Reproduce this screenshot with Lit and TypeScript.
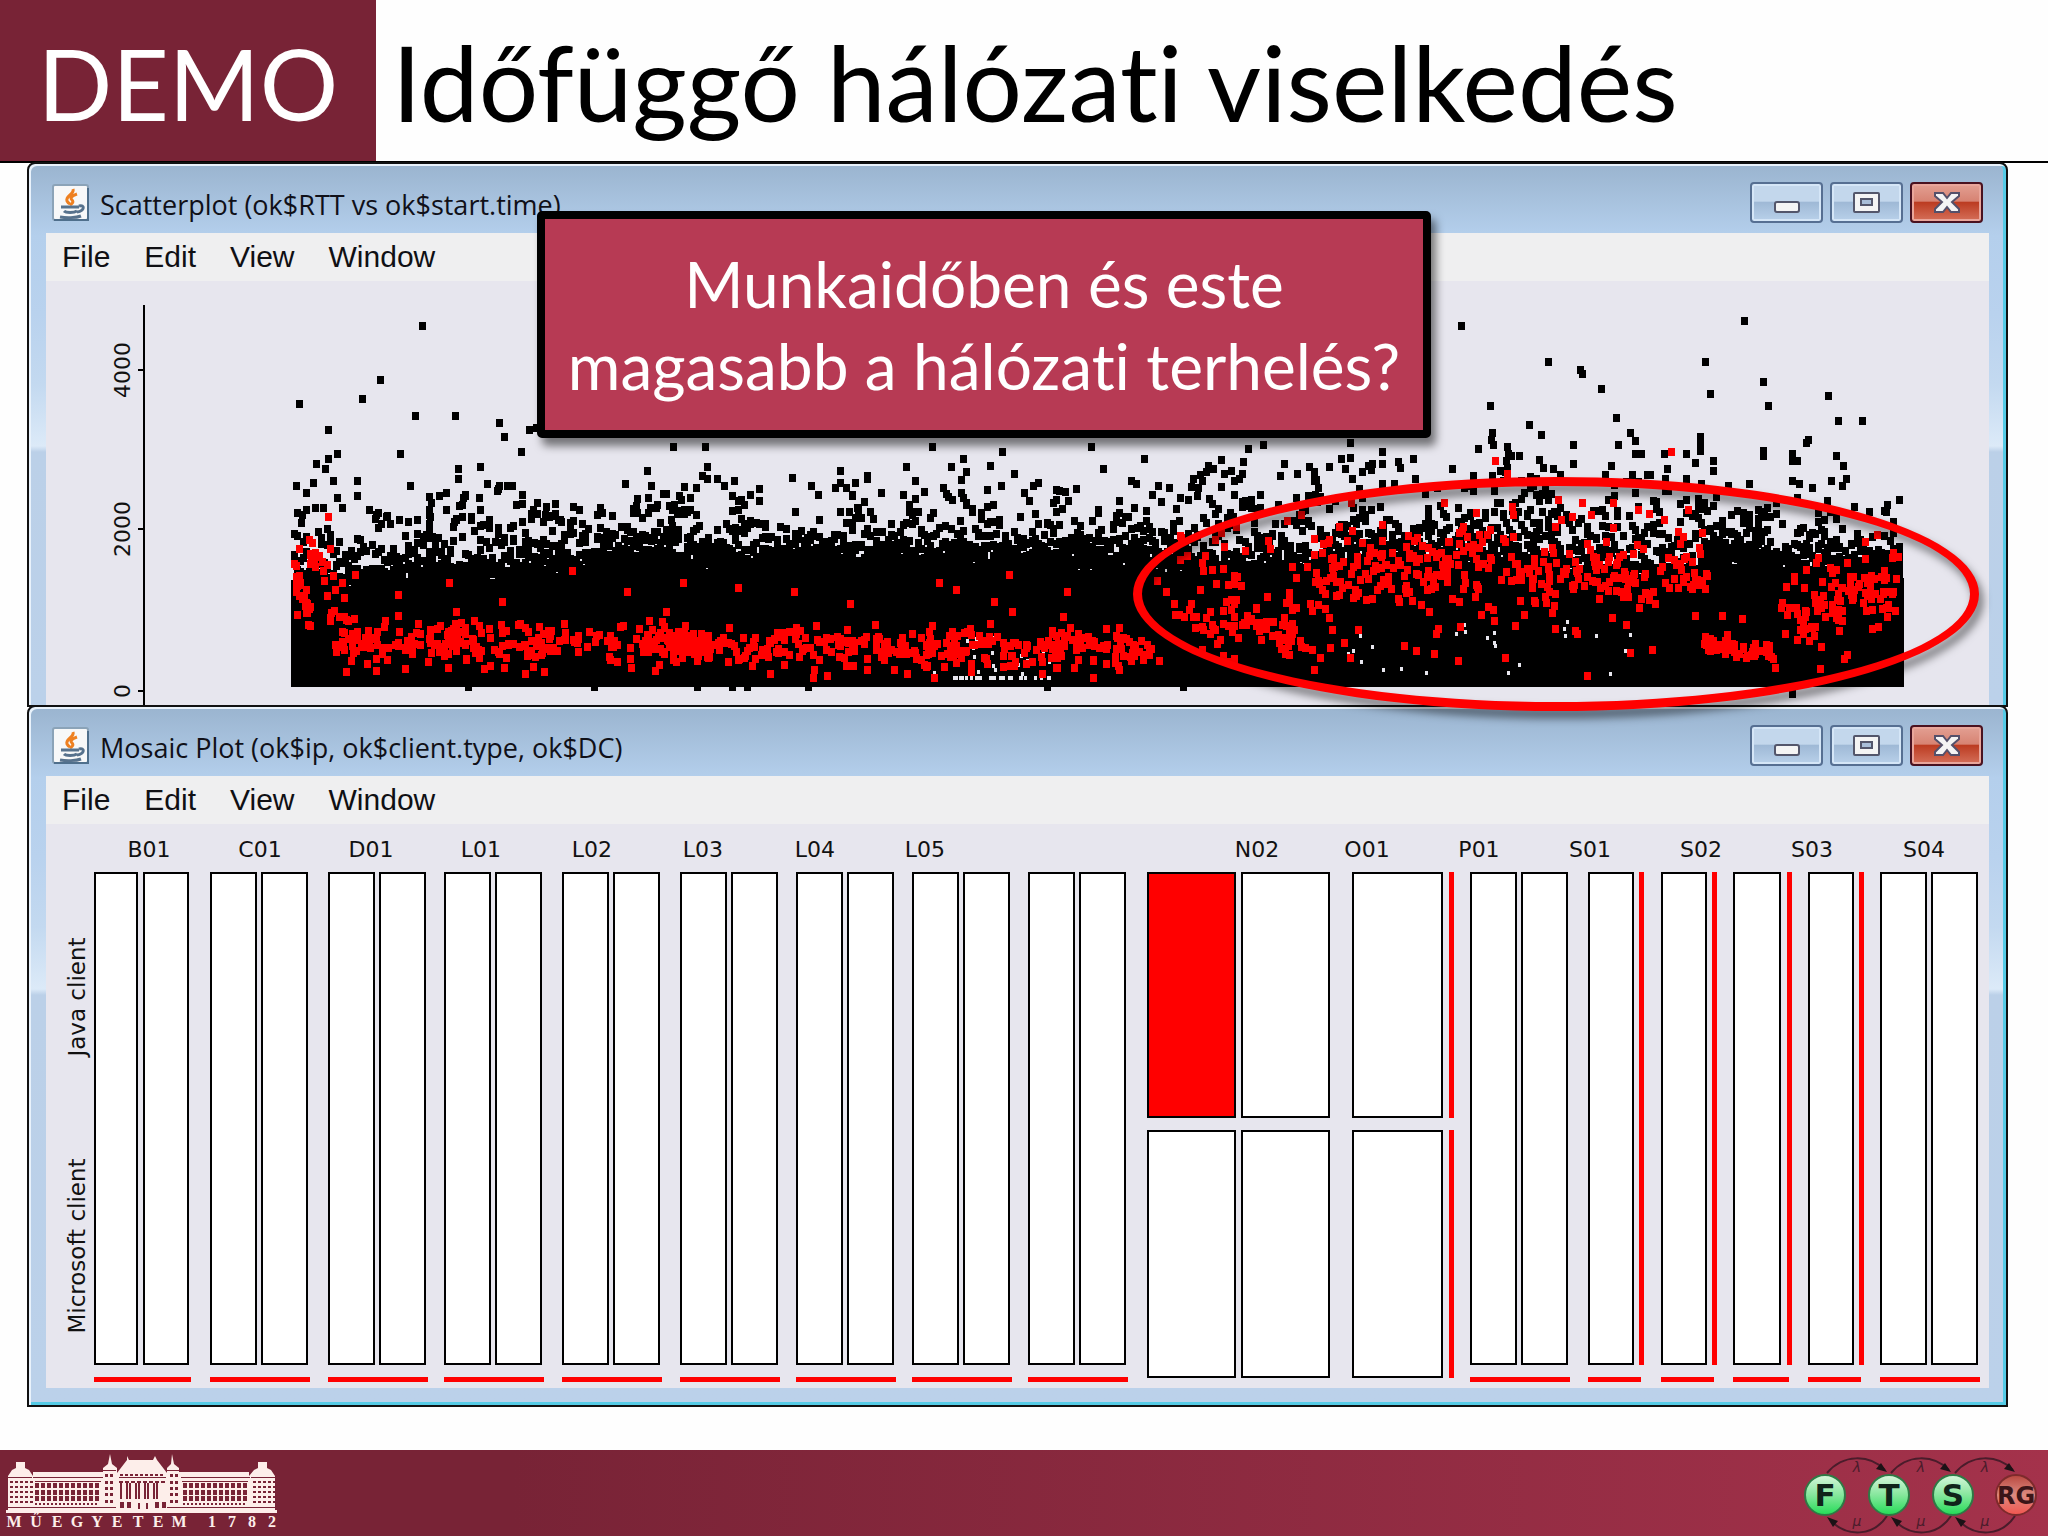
import { LitElement, html, svg, css } from "lit";
import { customElement, property } from "lit/decorators.js";

type Point = [number, number];

/** Deterministic pseudo random generator, so that the plot is stable between renders. */
function createRandom(seed: number): () => number {
  let s = seed;
  return () => {
    s = (s + 0x6d2b79f5) | 0;
    let t = Math.imul(s ^ (s >>> 15), 1 | s);
    t = (t + Math.imul(t ^ (t >>> 7), 61 | t)) ^ t;
    return ((t ^ (t >>> 14)) >>> 0) / 4294967296;
  };
}

const DATA_LEFT = 294;
const DATA_RIGHT = 1901;
const DATA_BOTTOM = 687;

/** Isolated slow requests, centre of each mark. */
const SLOW: Point[] = [
  [422,326],[380,380],[362,399],[299,404],[415,416],[455,416],[499,423],[504,437],[328,430],[529,430],[536,428],
  [337,454],[400,454],[328,459],[316,464],[325,469],[458,469],[480,467],[458,479],[521,452],[673,447],[647,471],
  [625,484],[296,486],[313,483],[333,481],[357,481],[306,493],[410,486],[487,484],[499,486],[497,491],[512,486],
  [337,498],[357,496],[439,496],[446,493],[463,498],[479,498],[429,497],[431,503],[429,510],[430,517],[429,524],
  [429,531],[430,538],[306,510],[302,515],[301,523],[315,508],[323,508],[342,508],[369,510],[376,515],[386,517],
  [399,520],[417,520],[446,510],[454,522],[480,510],[533,510],[545,515],[579,510],[602,513],[560,520],[637,499],
  [636,506],[637,513],[636,537],[648,498],[656,508],[650,508],[679,496],[672,510],[677,513],[671,520],[674,505],
  [705,447],[932,447],[1002,452],[1091,447],[963,459],[951,467],[966,472],[961,480],[1014,474],[1103,469],
  [1144,459],[707,467],[707,479],[717,479],[734,481],[724,486],[811,486],[835,488],[867,479],[818,495],[852,495],
  [881,493],[903,495],[857,508],[943,488],[948,497],[961,493],[946,494],[952,500],[963,498],[1001,486],[1033,486],[1038,483],
  [1024,493],[1059,491],[1056,500],[1076,489],[1098,510],[1131,481],[1136,484],[1169,488],[1180,498],[1188,500],
  [1248,449],[1263,445],[1243,462],[1231,471],[1234,481],[1234,495],[1208,466],[1213,469],[1200,475],[1193,479],
  [1202,481],[1198,488],[1206,472],[1284,464],[1280,476],[1297,474],[1309,467],[1314,472],[1316,480],[1318,488],
  [1315,495],[1320,497],[1350,443],[1341,459],[1350,458],[1345,469],[1352,479],[1461,326],[1744,321],[1548,362],
  [1580,370],[1582,374],[1705,362],[1601,389],[1710,394],[1763,382],[1490,406],[1768,406],[1828,396],[1838,421],
  [1862,421],[1616,418],[1529,425],[1541,435],[1492,433],[1491,440],[1493,445],[1630,433],[1635,441],[1573,445],
  [1618,445],[1700,437],[1700,444],[1700,451],[1686,454],[1664,454],[1635,454],[1641,454],[1478,449],[1507,447],
  [1508,454],[1506,461],[1507,468],[1505,472],[1519,456],[1511,456],[1763,451],[1763,456],[1808,440],[1806,443],
  [1792,454],[1792,461],[1797,461],[1836,456],[1843,466],[1846,479],[1831,481],[1792,481],[1799,484],[1749,484],
  [1713,461],[1713,471],[1686,479],[1667,469],[1573,464],[1611,466],[1539,460],[1543,468],[1553,469],[1560,475],
  [1452,469],[1413,459],[1398,462],[1400,468],[1382,452],[1382,464],[1372,464],[1368,466],[1382,484],[1394,484],
  [1415,479],[1473,476],[1492,476],[1899,500],[1886,512],[1792,694],[468,687],[594,687],[697,687],
  [732,687],[747,687],[808,687],[1047,687],[1183,687],
];

/** Isolated marks of the selected machine. */
const RED_SINGLE: Point[] = [
  [328,517],[309,540],[299,549],[330,549],[355,575],[398,595],[449,583],[456,612],[398,616],[502,602],[572,571],
  [627,592],[666,612],[683,583],[738,588],[794,592],[850,604],[939,583],[956,590],[1009,575],[994,602],[1067,592],
  [1671,452],[1495,461],[1507,474],[1287,521],[1301,515],[1352,531],[1180,536],[1157,581],[1166,592],[1174,604],[1695,616],
  [1742,619],[1877,535],[1351,503],[1444,503],[1448,542],[1512,507],[1513,515],[1558,500],[1582,503],[1613,503],
  [1638,510],[1688,510],[1591,515],[1561,520],[1664,520],[1613,528],[1678,532],[1353,598],[1722,616],
];

/** Upper edge of the solid black band and the fall-off height above it. */
function profile(x: number): { top: number; spread: number } {
  if (x < 330) return { top: 575, spread: 30 };
  if (x < 500) return { top: 574 - (x - 330) * 0.05, spread: 22 };
  if (x < 660) return { top: 566 - (x - 500) * 0.1, spread: 25 };
  if (x < 1150) return { top: 552, spread: 24 };
  if (x < 1350) return { top: 558, spread: 29 };
  if (x < 1560) return { top: 550, spread: 27 };
  if (x < 1700) return { top: 562, spread: 33 };
  if (x < 1770) return { top: 545, spread: 19 };
  return { top: 560, spread: 22 };
}

function buildBlack(): Point[] {
  const random = createRandom(41);
  const points: Point[] = [...SLOW];
  let burst = 1;
  for (let x = DATA_LEFT; x <= DATA_RIGHT; x += 3) {
    const { top, spread } = profile(x);
    if (random() < 0.3) burst = 0.5 + random();
    for (let i = 0; i < 4; i++) {
      const height = -Math.log(1 - random() * 0.94) * spread * burst;
      points.push([x, top - height + 7]);
    }
    for (let y = top + 6; y < top + 26; y += 6) points.push([x, y + random() * 6]);
  }
  return points;
}

function buildRed(): Point[] {
  const random = createRandom(97);
  const bell = () => random() + random() + random() - 1.5;
  const points: Point[] = [...RED_SINGLE];
  const cloud = (n: number, x0: number, x1: number, y0: number, y1: number, sd: number) => {
    for (let i = 0; i < n; i++) {
      const k = random();
      points.push([x0 + (x1 - x0) * k, y0 + (y1 - y0) * k + bell() * sd * 2]);
    }
  };
  cloud(28, 294, 312, 575, 612, 13);
  cloud(14, 308, 328, 556, 568, 7);
  cloud(18, 322, 358, 580, 640, 22);
  cloud(230, 334, 700, 640, 645, 9);
  cloud(290, 640, 1150, 646, 648, 9);
  cloud(45, 700, 1160, 640, 644, 14);
  cloud(30, 330, 1160, 670, 670, 4);
  cloud(60, 1172, 1296, 616, 632, 9);
  cloud(50, 1180, 1330, 570, 600, 28);
  cloud(150, 1310, 1708, 563, 580, 20);
  cloud(90, 1310, 1708, 574, 574, 12);
  cloud(60, 1310, 1708, 604, 600, 32);
  cloud(20, 1330, 1708, 545, 540, 20);
  cloud(20, 1200, 1600, 652, 650, 11);
  cloud(60, 1704, 1776, 644, 656, 5);
  cloud(50, 1778, 1901, 616, 590, 18);
  cloud(40, 1800, 1901, 616, 580, 12);
  cloud(18, 1775, 1901, 575, 560, 20);
  cloud(8, 1790, 1850, 636, 650, 12);
  return points.filter(([, y]) => y < 680);
}

function buildGaps(): Point[] {
  const random = createRandom(12);
  const points: Point[] = [];
  for (let i = 0; i < 26; i++) points.push([930 + random() * 160, 636 + random() * 40]);
  for (let i = 0; i < 24; i++) points.push([1340 + random() * 300, 622 + random() * 54]);
  for (let i = 0; i < 24; i++) points.push([950 + random() * 120, 678]);
  return points;
}

const marks = (points: Point[], w: number, h: number) =>
  points
    .map(([x, y]) => `M${Math.round(x - w / 2)} ${Math.round(y - h / 2)}h${w}v${h}h-${w}z`)
    .join("");

const BLACK_PATH = marks(buildBlack(), 7, 8);
const RED_PATH = marks(buildRed(), 7, 8);
const GAP_PATH = marks(buildGaps(), 3, 4);

interface MosaicGroup {
  /** Left and right edges of the framed cells. */
  cells: Point[];
  /** Empty category drawn as a vertical red bar. */
  bar?: number;
  /** Split into two client types. */
  split?: boolean;
  selected?: boolean;
}

const pair = (x: number): MosaicGroup => ({ cells: [[x, x + 45], [x + 51, x + 96]] });

const MOSAIC: MosaicGroup[] = [
  { cells: [[95, 137], [144, 188]] },
  pair(211), pair(329), pair(445), pair(563), pair(681), pair(797), pair(913), pair(1029),
  { cells: [[1148, 1235], [1242, 1329]], split: true, selected: true },
  { cells: [[1353, 1442]], bar: 1451, split: true },
  pair(1471),
  { cells: [[1589, 1633]], bar: 1641 },
  { cells: [[1662, 1706]], bar: 1714 },
  { cells: [[1734, 1780]], bar: 1789 },
  { cells: [[1809, 1853]], bar: 1861 },
  pair(1881),
];

const MOSAIC_LABELS: [string, number][] = [
  ["B01", 149], ["C01", 260], ["D01", 371], ["L01", 481], ["L02", 592], ["L03", 703], ["L04", 815], ["L05", 925],
  ["N02", 1257], ["O01", 1367], ["P01", 1479], ["S01", 1590], ["S02", 1701], ["S03", 1812], ["S04", 1924],
];

@customElement("scatter-chart")
export class ScatterChart extends LitElement {
  static styles = css`
    :host { display: block; }
    .chart { display: block; width: 100%; height: auto; }
    .tick { font: 22px "DejaVu Sans", sans-serif; fill: #111; text-anchor: middle; }
    .axis { stroke: #000; stroke-width: 2; fill: none; }
    .gap { fill: #e7e6ee; }
    .red { fill: #ff0000; }
  `;

  render() {
    return html`
      <svg class="chart" viewBox="46 281 1943 424" role="img" aria-label="Scatterplot" shape-rendering="crispEdges">
        <path class="axis" d="M144 305V705M138 370h6M138 529h6M138 691h6" />
        ${([["4000", 370], ["2000", 529], ["0", 691]] as [string, number][]).map(
          ([label, y]) => svg`<text class="tick" transform="translate(130 ${y}) rotate(-90)">${label}</text>`,
        )}
        <path d="M291 592H330V588H500L660 570H1150V572H1350V566H1560V576H1700V564H1770V578H1904V${DATA_BOTTOM}H291z" />
        <path d=${BLACK_PATH} />
        <path class="gap" d=${GAP_PATH} />
        <path class="red" d=${RED_PATH} />
      </svg>
    `;
  }
}

@customElement("mosaic-chart")
export class MosaicChart extends LitElement {
  static styles = css`
    :host { display: block; }
    .chart { display: block; width: 100%; height: auto; }
    .label { font: 22px "DejaVu Sans", sans-serif; fill: #111; text-anchor: middle; }
    .label.side { font-size: 23px; }
    .cell { fill: #fff; stroke: #000; stroke-width: 2; }
    .cell.hot { fill: #ff0000; }
    .bar { stroke: #ff0000; stroke-width: 5; }
  `;

  private group(g: MosaicGroup) {
    const rows: Point[] = g.split ? [[873, 1117], [1131, 1377]] : [[873, 1364]];
    const left = g.cells[0][0] - 1;
    const right = g.bar ?? g.cells[g.cells.length - 1][1] + 3;
    return svg`
      ${rows.map(([top, bottom], row) => svg`
        ${g.cells.map(([x0, x1], i) => svg`
          <rect class=${g.selected && row === 0 && i === 0 ? "cell hot" : "cell"}
            x=${x0} y=${top} width=${x1 - x0} height=${bottom - top} />`)}
        ${g.bar ? svg`<path class="bar" d="M${g.bar} ${top - 1}V${bottom + 1}" />` : ""}
      `)}
      ${g.split ? "" : svg`<path class="bar" d="M${left} 1379H${right}" />`}
    `;
  }

  render() {
    return html`
      <svg class="chart" viewBox="46 824 1943 564" role="img" aria-label="Mosaic plot">
        ${MOSAIC_LABELS.map(([name, x]) => svg`<text class="label" x=${x} y="857">${name}</text>`)}
        <text class="label side" transform="translate(85 997) rotate(-90)">Java client</text>
        <text class="label side" transform="translate(85 1246) rotate(-90)">Microsoft client</text>
        <g shape-rendering="crispEdges">${MOSAIC.map((g) => this.group(g))}</g>
      </svg>
    `;
  }
}

@customElement("plot-window")
export class PlotWindow extends LitElement {
  static styles = css`
    :host { display: block; }
    .frame {
      border: 2px solid #111;
      border-radius: 8px 8px 0 0;
      box-shadow: inset 2px 2px 0 #e9f2fb, inset -3px 0 0 #55cbe6;
      padding: 0 17px;
      background: linear-gradient(180deg, #9ab4cf 0, #b4cfec 71px, #b9d2ee 150px, #c3d9f0 220px, #dceaf8 282px, #bbd0e8 288px, #bbd1ea 100%);
    }
    .frame.last { padding-bottom: 17px; box-shadow: inset 2px 2px 0 #e9f2fb, inset -3px -3px 0 #55cbe6; }
    .titlebar { display: flex; align-items: center; gap: 10px; height: 69px; padding: 8px 6px 0 6px; box-sizing: border-box; }
    .icon { width: 38px; height: 38px; flex: none; }
    .title { flex: 1; margin: 0; padding-top: 4px; font: 27px/40px "Open Sans", sans-serif; color: #101018; }
    .controls { display: flex; gap: 7px; }
    .control {
      width: 73px;
      height: 41px;
      padding: 0;
      border: 2px solid #566f92;
      border-radius: 4px;
      box-shadow: inset 0 0 0 2px #d5e6f7;
      background: linear-gradient(180deg, #c3d7ec 0 46%, #9fb9d6 50%, #b9d1ea 100%);
    }
    .control.close {
      border-color: #4a1220;
      box-shadow: inset 0 0 0 2px #e9a69b;
      background: linear-gradient(180deg, #e3a093 0, #d78373 46%, #bc3c22 50%, #d5705a 100%);
    }
    .glyph { display: block; width: 100%; height: 100%; }
    .menu { display: flex; gap: 34px; height: 48px; padding: 0 16px; background: #efeff0; }
    .item { border: 0; background: none; padding: 0; font: 30px/46px "Liberation Sans", sans-serif; color: #101014; }
    .content { background: #e7e6ee; }
  `;

  @property() heading = "";
  @property({ type: Boolean }) last = false;

  render() {
    return html`
      <section class=${this.last ? "frame last" : "frame"}>
        <header class="titlebar">
          <svg class="icon" viewBox="0 0 38 38" aria-hidden="true">
            <rect x="1" y="1" width="35" height="35" rx="2" fill="#f7f8f9" stroke="#8ba3b8" stroke-width="2" />
            <path d="M2 36H36V4" fill="none" stroke="#4f6f8c" stroke-width="2" />
            <path d="M21 5C23 10 13 12 15 17C16 19 18 20 18 20M25 10C19 12 18 14 20 16C22 18 20 20 18 21" fill="none" stroke="#ee8021" stroke-width="3" />
            <path d="M9 23H27M27 22C33 20 33 27 25 28M12 27C14 29 22 29 25 27M8 33C14 34 24 34 29 32" fill="none" stroke="#57728d" stroke-width="3" />
          </svg>
          <h2 class="title">${this.heading}</h2>
          <div class="controls">
            <button class="control" aria-label="Minimize">
              <svg class="glyph" viewBox="0 0 69 37"><rect x="23" y="18" width="24" height="10" rx="2" fill="#f4f4f4" stroke="#53566b" stroke-width="2" /></svg>
            </button>
            <button class="control" aria-label="Maximize">
              <svg class="glyph" viewBox="0 0 69 37"><rect x="22" y="9" width="25" height="19" rx="1" fill="#f4f4f4" stroke="#53566b" stroke-width="2" /><rect x="29" y="15" width="11" height="6" fill="#a9bed8" stroke="#53566b" stroke-width="2" /></svg>
            </button>
            <button class="control close" aria-label="Close">
              <svg class="glyph" viewBox="0 0 69 37"><path d="M23 9H31L35 14L39 9H47V12L40 18L47 25V28H39L35 23L31 28H23V25L30 18L23 12Z" fill="#f4f4f4" stroke="#54506a" stroke-width="2" /></svg>
            </button>
          </div>
        </header>
        <nav class="menu">
          ${["File", "Edit", "View", "Window"].map((m) => html`<button class="item">${m}</button>`)}
        </nav>
        <div class="content"><slot></slot></div>
      </section>
    `;
  }
}

@customElement("university-logo")
export class UniversityLogo extends LitElement {
  static styles = css`
    :host { display: block; }
    .logo { display: block; width: 280px; height: 84px; }
    .name { font: bold 16px "Liberation Serif", serif; fill: #fdeeea; text-anchor: middle; }
    .stone { fill: #fdeeea; }
    .hole { fill: #782336; }
  `;

  private windows(x0: number, x1: number, step: number, rows: number[], w: number, h: number) {
    let d = "";
    for (const y of rows) for (let x = x0; x <= x1; x += step) d += `M${x} ${y}h${w}v${h}h-${w}z`;
    return svg`<path class="hole" d=${d} />`;
  }

  render() {
    return html`
      <svg class="logo" viewBox="0 0 280 84" role="img" aria-label="Műegyetem 1782">
        <path class="stone" d="M6 60H277V63H6zM8 60V26L12 20L16 18V12H25V18L29 20L33 26V22H103V18L108 14L110 4L112 14L117 18V23L127 10V6L129 10H153L155 6L157 10L167 23V18L171 14L172 4L174 14L179 18V22H249V26L254 20L258 18V12H267V18L271 20L275 26V60z" />
        <path class="hole" d="M33 27H103V28H33zM181 27H250V28H181zM8 27H32V28H8zM251 27H275V28H251zM8 57H116V58H8zM167 57H275V58H167zM119 27H166V28H119zM103 20h13v1h-13zM167 20h13v1h-13zM35 31h66v1H35zM182 31h66v1h-66z" />
        ${this.windows(35, 98, 6, [33, 40, 46], 4, 5)}
        ${this.windows(183, 246, 6, [33, 40, 46], 4, 5)}
        ${this.windows(35, 98, 4, [53], 2, 2)}
        ${this.windows(183, 246, 4, [53], 2, 2)}
        ${this.windows(10, 30, 5, [31, 36, 41, 46, 51], 3, 2)}
        ${this.windows(253, 273, 5, [31, 36, 41, 46, 51], 3, 2)}
        ${this.windows(105, 112, 5, [24, 31, 37, 43, 50], 3, 3)}
        ${this.windows(170, 176, 5, [24, 31, 37, 43, 50], 3, 3)}
        ${this.windows(120, 164, 5, [24], 3, 2)}
        ${this.windows(120, 160, 9, [33], 2, 16)}
        ${this.windows(126, 160, 9, [33], 2, 16)}
        ${this.windows(119, 164, 6, [31], 4, 2)}
        ${this.windows(120, 128, 7, [52], 4, 6)}
        ${this.windows(155, 163, 7, [52], 4, 6)}
        ${this.windows(138, 148, 8, [53], 2, 6)}
        <text class="name" x="14 36 57 77 97 117 138 158 179 195 212 232 252 272" y="77">MŰEGYETEM 1782</text>
      </svg>
    `;
  }
}

@customElement("group-logo")
export class GroupLogo extends LitElement {
  static styles = css`
    :host { display: block; }
    .logo { display: block; width: 248px; height: 86px; }
    .arc { fill: none; stroke: #4a1c2b; stroke-width: 2; }
    .head { fill: #1c1216; }
    .greek { font: italic 14px "DejaVu Sans", sans-serif; fill: #4a1c2b; text-anchor: middle; }
    .letter { font: bold 31px "DejaVu Sans", sans-serif; fill: #10241a; text-anchor: middle; }
    .letter.small { font-size: 24px; fill: #3b1518; }
  `;

  render() {
    const nodes: [string, number][] = [["F", 25], ["T", 89], ["S", 153], ["RG", 216]];
    return html`
      <svg class="logo" viewBox="0 0 248 86" role="img" aria-label="FTSRG">
        <defs>
          <linearGradient id="green" x1="0" y1="0" x2="0" y2="1">
            <stop offset="0" stop-color="#d9f7dd" /><stop offset="0.5" stop-color="#86e79d" /><stop offset="1" stop-color="#22dc55" />
          </linearGradient>
          <linearGradient id="red" x1="0" y1="0" x2="0" y2="1">
            <stop offset="0" stop-color="#b8473f" /><stop offset="0.5" stop-color="#dd8a80" /><stop offset="1" stop-color="#f3554f" />
          </linearGradient>
        </defs>
        ${[25, 89, 153].map(
          (x) => svg`
            <path class="arc" d="M${x + 2} 23C${x + 18} 4 ${x + 44} 4 ${x + 60} 20M${x + 62} 66C${x + 48} 87 ${x + 22} 87 ${x + 6} 71" />
            <path class="head" d="M${x + 62} 22L${x + 51} 19L${x + 56} 13zM${x + 2} 67L${x + 13} 71L${x + 8} 77z" />
            <text class="greek" x=${x + 32} y="22">λ</text>
            <text class="greek" x=${x + 32} y="76">μ</text>`,
        )}
        ${nodes.map(
          ([label, x]) => svg`
            <circle cx=${x} cy="45" r="20" fill=${label === "RG" ? "url(#red)" : "url(#green)"} stroke=${label === "RG" ? "#7d2a2c" : "#2e7a45"} stroke-width="2" />
            <text class=${label === "RG" ? "letter small" : "letter"} x=${x} y=${label === "RG" ? 54 : 56}>${label}</text>`,
        )}
      </svg>
    `;
  }
}

@customElement("app-root")
export class AppRoot extends LitElement {
  static styles = css`
    :host { display: block; min-height: 100vh; background: #fefefe; }
    .slide { display: flex; flex-direction: column; min-height: 100vh; }
    .heading { display: flex; height: 161px; border-bottom: 2px solid #000; }
    .tag {
      display: flex;
      align-items: center;
      justify-content: center;
      box-sizing: border-box;
      width: 376px;
      padding-top: 4px;
      background: #782336;
      color: #fff;
    }
    .tag-text { font: 98px/120px Lato, sans-serif; }
    .title { margin: 0; padding: 20px 0 0 16px; font: 105px/122px Lato, sans-serif; font-variant-ligatures: none; color: #000; white-space: nowrap; }
    .stage { position: relative; margin: -1px 40px 0 27px; }
    .first { margin-bottom: -2px; }
    .note {
      position: absolute;
      left: 510px;
      top: 49px;
      box-sizing: border-box;
      width: 894px;
      height: 227px;
      margin: 0;
      padding: 24px 0 0;
      border: 8px solid #000;
      border-radius: 5px;
      background: #b73a54;
      box-shadow: 5px 8px 8px rgba(0, 0, 0, 0.5);
      color: #fff;
      font: 64px/82px Lato, sans-serif;
      font-variant-ligatures: none;
      text-align: center;
      white-space: nowrap;
    }
    .ring {
      position: absolute;
      left: 1106px;
      top: 315px;
      box-sizing: border-box;
      width: 846px;
      height: 234px;
      border: 9px solid #ff0000;
      border-radius: 50%;
      filter: drop-shadow(4px 7px 4px rgba(0, 0, 0, 0.5));
    }
    .footer {
      display: flex;
      align-items: flex-start;
      justify-content: space-between;
      height: 86px;
      margin-top: auto;
      background: linear-gradient(90deg, #782336 0, #782336 25%, #a4324b 100%);
    }
  `;

  render() {
    return html`
      <main class="slide">
        <header class="heading">
          <div class="tag"><span class="tag-text">DEMO</span></div>
          <h1 class="title">Időfüggő hálózati viselkedés</h1>
        </header>
        <div class="stage">
          <plot-window class="first" heading="Scatterplot (ok$RTT vs ok$start.time)">
            <scatter-chart></scatter-chart>
          </plot-window>
          <plot-window last heading="Mosaic Plot (ok$ip, ok$client.type, ok$DC)">
            <mosaic-chart></mosaic-chart>
          </plot-window>
          <div class="ring"></div>
          <p class="note">Munkaidőben és este<br />magasabb a hálózati terhelés?</p>
        </div>
        <footer class="footer">
          <university-logo></university-logo>
          <group-logo></group-logo>
        </footer>
      </main>
    `;
  }
}
